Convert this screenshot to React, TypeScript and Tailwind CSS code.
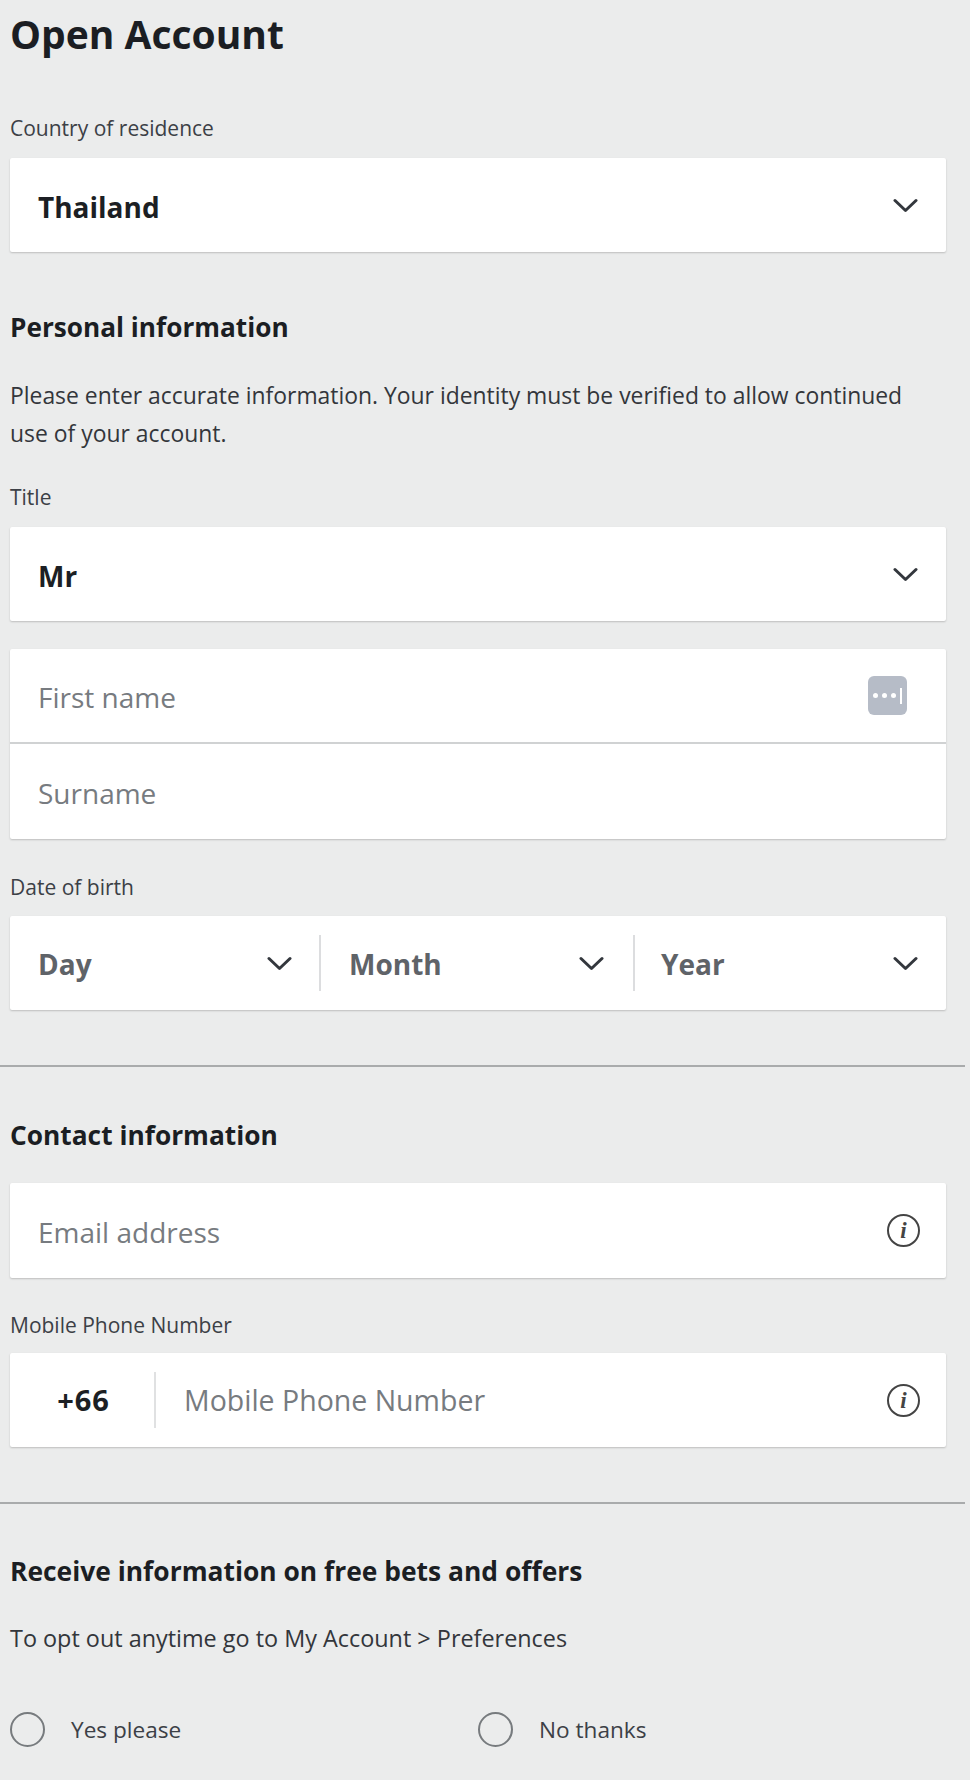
const FONT = "font-['Open_Sans','Noto_Sans',sans-serif]";
const CARD = "bg-white rounded-[2px] shadow-[0_1px_2px_rgba(0,0,0,0.2)]";

function Chevron() {
  return (
    <svg width="25" height="15" viewBox="0 0 25 15" fill="none" className="shrink-0">
      <path d="M2 2.5 L12.5 12.5 L23 2.5" stroke="#33373d" strokeWidth="3" strokeLinecap="round" strokeLinejoin="round" />
    </svg>
  );
}

function Info() {
  return (
    <span className="flex w-[33px] h-[33px] items-center justify-center rounded-full border-2 border-[#444] text-[23px] leading-none font-['Liberation_Serif',serif] italic font-bold text-[#444]">
      i
    </span>
  );
}

function Label({ children, className = "" }: { children: React.ReactNode; className?: string }) {
  return <p className={`text-[21px] leading-[28px] text-[#3c4046] ${className}`}>{children}</p>;
}

function SelectField({ value }: { value: string }) {
  return (
    <div className={`flex h-[94px] items-center justify-between pl-[28px] pr-[28px] ${CARD}`}>
      <span className="text-[28px] font-bold text-[#1c1f24] mt-[3px]">{value}</span>
      <Chevron />
    </div>
  );
}

function InputRow({ placeholder, right, divider }: { placeholder: string; right?: React.ReactNode; divider?: boolean }) {
  return (
    <div className={`flex h-[95px] items-center justify-between pl-[28px] pr-[26px] ${divider ? "border-b-2 border-[#d0d2d3]" : ""}`}>
      <span className="text-[28px] text-[#777b80] mt-[2px]">{placeholder}</span>
      {right}
    </div>
  );
}

export default function App() {
  return (
    <div className={`w-[970px] h-[1780px] overflow-hidden bg-[#ebecec] ${FONT}`}>
      <div className="pl-[10px] pr-[24px]">
        <h1 className="pt-[8px] text-[39px] leading-[52px] font-bold text-[#1b1e23]">Open Account</h1>

        <Label className="mt-[54px] mb-[16px]">Country of residence</Label>
        <SelectField value="Thailand" />

        <h2 className="mt-[57px] text-[26.2px] leading-[36px] font-bold text-[#1b1e23]">Personal information</h2>
        <p className="mt-[32px] max-w-[915px] text-[22.9px] leading-[37.5px] text-[#33363b]">
          Please enter accurate information. Your identity must be verified to allow continued use of your account.
        </p>

        <Label className="mt-[31px] mb-[16px]">Title</Label>
        <SelectField value="Mr" />

        <div className={`mt-[28px] ${CARD}`}>
          <InputRow
            placeholder="First name"
            divider
            right={
              <span className="flex w-[39px] h-[39px] mr-[13px] items-center justify-center gap-[4px] rounded-[6px] bg-[#b6bcc7]">
                <span className="w-[5px] h-[5px] rounded-full bg-white" />
                <span className="w-[5px] h-[5px] rounded-full bg-white" />
                <span className="w-[5px] h-[5px] rounded-full bg-white" />
                <span className="w-[2px] h-[16px] bg-white" />
              </span>
            }
          />
          <InputRow placeholder="Surname" />
        </div>

        <Label className="mt-[34px] mb-[15px]">Date of birth</Label>
        <div className={`flex h-[94px] items-center ${CARD}`}>
          <div className="flex w-[309px] items-center justify-between pl-[28px] pr-[27px]">
            <span className="text-[28px] font-bold text-[#5f6368] mt-[2px]">Day</span>
            <Chevron />
          </div>
          <span className="w-[2px] h-[56px] bg-[#dcdddf]" />
          <div className="flex w-[312px] items-center justify-between pl-[28px] pr-[29px]">
            <span className="text-[28px] font-bold text-[#5f6368] mt-[2px]">Month</span>
            <Chevron />
          </div>
          <span className="w-[2px] h-[56px] bg-[#dcdddf]" />
          <div className="flex flex-1 items-center justify-between pl-[26px] pr-[28px]">
            <span className="text-[28px] font-bold text-[#5f6368] mt-[2px]">Year</span>
            <Chevron />
          </div>
        </div>
      </div>

      <hr className="mt-[55px] w-[965px] border-0 h-[2px] bg-[#a9abac]" />

      <div className="pl-[10px] pr-[24px]">
        <h2 className="mt-[50px] text-[26.3px] leading-[36px] font-bold text-[#1b1e23]">Contact information</h2>
        <div className={`mt-[30px] ${CARD}`}>
          <InputRow placeholder="Email address" right={<Info />} />
        </div>

        <Label className="mt-[33px] mb-[14px]">Mobile Phone Number</Label>
        <div className={`flex h-[94px] items-center ${CARD}`}>
          <span className="w-[144px] pl-[3px] text-center text-[29px] font-bold tracking-[1px] text-[#1c1f24]">+66</span>
          <span className="w-[2px] h-[56px] bg-[#e0e1e2]" />
          <span className="flex-1 pl-[28px] text-[28.5px] text-[#777b80]">Mobile Phone Number</span>
          <span className="pr-[26px]"><Info /></span>
        </div>
      </div>

      <hr className="mt-[55px] w-[965px] border-0 h-[2px] bg-[#a9abac]" />

      <div className="pl-[10px] pr-[24px]">
        <h2 className="mt-[49px] text-[26.4px] leading-[36px] font-bold text-[#1b1e23]">
          Receive information on free bets and offers
        </h2>
        <p className="mt-[33px] text-[23.4px] leading-[32px] text-[#33363b]">To opt out anytime go to My Account &gt; Preferences</p>
        <div className="mt-[58px] flex">
          <div className="flex w-[468px] items-center gap-[26px]">
            <span className="w-[35px] h-[35px] rounded-full border-2 border-[#777b7e]" />
            <span className="text-[22.6px] text-[#3c4046]">Yes please</span>
          </div>
          <div className="flex items-center gap-[26px]">
            <span className="w-[35px] h-[35px] rounded-full border-2 border-[#777b7e]" />
            <span className="text-[22.6px] text-[#3c4046]">No thanks</span>
          </div>
        </div>
      </div>
    </div>
  );
}
